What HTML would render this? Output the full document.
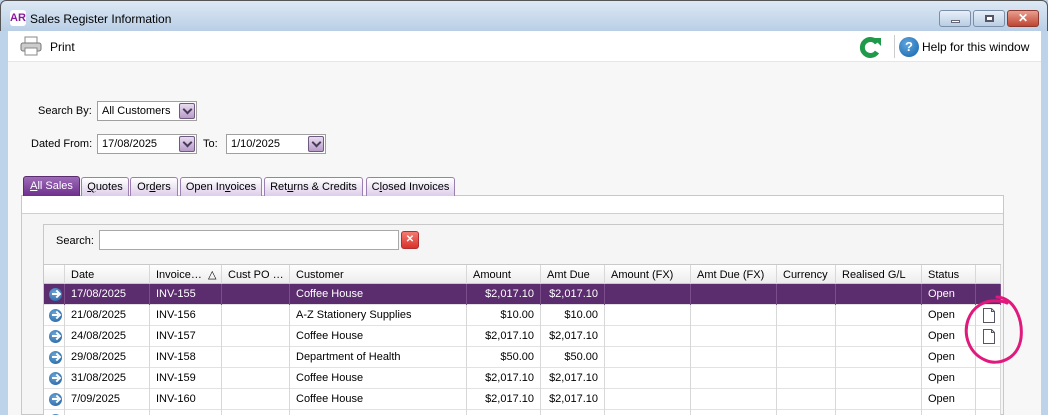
<!DOCTYPE html>
<html style="width:1048px;height:415px;overflow:hidden"><head><style>
*{margin:0;padding:0;box-sizing:border-box}
body{width:1048px;height:415px;overflow:hidden;font-family:"Liberation Sans",sans-serif;font-size:11px;color:#000;position:relative;background:#bcd3ea}
.a{position:absolute}
.title{left:0;top:0;width:1048px;height:31px;background:linear-gradient(#dde8f4,#b9cfe6);border:1px solid #555;border-bottom:none;border-radius:6px 6px 0 0}
.body{left:8px;top:31px;width:1033px;height:384px;background:#f7f7f7}
.tb{left:8px;top:31px;width:1033px;height:31px;background:#fff;border-bottom:1px solid #e6e6e6}
.combo{background:#fff;border:1px solid #a0a0a0;height:20px;padding:3px 4px;font-size:11px}
.dd{position:absolute;right:1px;top:1px;width:16px;height:16px;background:linear-gradient(#e8dcef,#b79cc8);border:1px solid #6e5a80;border-radius:2px}
.dd:after{content:"";position:absolute;left:4px;top:2px;width:5px;height:5px;border-right:2px solid #4a3a5a;border-bottom:2px solid #4a3a5a;transform:rotate(45deg)}
.tab{top:177px;height:19px;border:1px solid #9a7fb0;border-bottom:none;background:linear-gradient(#fff,#dccdea);border-radius:3px 3px 0 0;padding:3px 0;text-align:center;white-space:nowrap}
.grid{left:44px;top:264px;width:957px}
.row{position:absolute;left:0;width:957px;height:21px;border-bottom:1px solid #e2e2e2;background:#fff}
.c{position:absolute;top:0;height:21px;line-height:20px;padding:0 6px;border-right:1px solid #d8d8d8;white-space:nowrap;overflow:hidden}
.r{text-align:right}
.hdr{background:linear-gradient(#fff,#ececec);border-top:1px solid #c9c9c9;border-bottom:1px solid #c9c9c9;height:20px}
.sel{background:#5c2d6e;color:#fff}
.sel .c{border-right-color:#7a4e8a}
.arr{position:absolute;left:5px;top:4px;width:13px;height:13px;border-radius:50%;background:radial-gradient(circle at 40% 35%,#6aa3d6,#1d5f9c)}
.arr:after{content:"";position:absolute;left:3px;top:5px;width:6px;height:2px;background:#fff}
.arr:before{content:"";position:absolute;left:5px;top:3px;width:4px;height:4px;border-right:2px solid #fff;border-top:2px solid #fff;transform:rotate(45deg)}
</style></head><body>
<div class="a title"></div>
<div class="a" style="left:10px;top:10px;width:16px;height:16px;background:#fff;border-radius:3px;color:#8a1a9c;font-weight:bold;font-size:11px;line-height:16px;text-align:center">AR</div>
<div class="a" style="left:30px;top:12px;font-size:12px">Sales Register Information</div>
<div class="a" style="left:939px;top:10px;width:32px;height:17px;border:1px solid #7a8ea8;border-radius:3px;background:linear-gradient(#e7eff8,#b9cde3)"><div class="a" style="left:11px;top:9px;width:9px;height:3px;background:#fff;border:1px solid #667"></div></div>
<div class="a" style="left:973px;top:10px;width:32px;height:17px;border:1px solid #7a8ea8;border-radius:3px;background:linear-gradient(#e7eff8,#b9cde3)"><div class="a" style="left:11px;top:4px;width:9px;height:7px;border:2px solid #556;background:#fff"></div></div>
<div class="a" style="left:1007px;top:10px;width:32px;height:17px;border:1px solid #8a3a30;border-radius:3px;background:linear-gradient(#e8a090,#c04432);color:#fff;font-weight:bold;text-align:center;line-height:15px;font-size:12px">✕</div>
<div class="a body"></div>
<div class="a tb"></div>
<svg class="a" style="left:20px;top:36px" width="22" height="20"><rect x="5" y="1" width="12" height="7" fill="#fff" stroke="#888"/><rect x="1" y="7" width="20" height="8" rx="2" fill="#ccc" stroke="#777"/><rect x="5" y="12" width="12" height="7" fill="#fff" stroke="#888"/></svg>
<div class="a" style="left:50px;top:40px;font-size:12px">Print</div>
<svg class="a" style="left:858px;top:35px" width="26" height="24"><path d="M19 8 A8 8 0 1 0 19 17" fill="none" stroke="#1f9a4a" stroke-width="5"/><path d="M15 3 L23 3 L23 11 Z" fill="#1f9a4a"/></svg>
<div class="a" style="left:894px;top:35px;width:1px;height:23px;background:#ccc"></div>
<div class="a" style="left:899px;top:37px;width:20px;height:20px;border-radius:50%;background:radial-gradient(circle at 40% 35%,#5fa6e0,#1463a8);color:#fff;font-weight:bold;text-align:center;line-height:20px;font-size:13px">?</div>
<div class="a" style="left:922px;top:40px;font-size:12px">Help for this window</div>

<div class="a" style="left:38px;top:105px">Search By:</div>
<div class="a combo" style="left:97px;top:101px;width:100px">All Customers<div class="dd"></div></div>
<div class="a" style="left:31px;top:138px">Dated From:</div>
<div class="a combo" style="left:97px;top:134px;width:100px">17/08/2025<div class="dd"></div></div>
<div class="a" style="left:203px;top:138px">To:</div>
<div class="a combo" style="left:226px;top:134px;width:100px">1/10/2025<div class="dd"></div></div>

<div class="a" style="left:21px;top:195px;width:983px;height:220px;border:1px solid #c8c8c8;background:#f5f5f5"></div>
<div class="a" style="left:22px;top:196px;width:981px;height:18px;background:#fff;border-bottom:1px solid #d0d0d0"></div>
<div class="a tab" style="left:23px;width:57px;background:linear-gradient(#9c6bb8,#6e2f8c);color:#fff;border-color:#5c2d6e;top:176px;height:20px"><u>A</u>ll Sales</div>
<div class="a tab" style="left:81px;width:48px"><u>Q</u>uotes</div>
<div class="a tab" style="left:130px;width:48px">Or<u>d</u>ers</div>
<div class="a tab" style="left:180px;width:82px">Open In<u>v</u>oices</div>
<div class="a tab" style="left:264px;width:99px">Ret<u>u</u>rns &amp; Credits</div>
<div class="a tab" style="left:366px;width:89px">C<u>l</u>osed Invoices</div>

<div class="a" style="left:43px;top:224px;width:960px;height:191px;border-left:1px solid #c8c8c8;border-top:1px solid #c8c8c8"></div>
<div class="a" style="left:56px;top:235px">Search:</div>
<div class="a" style="left:99px;top:230px;width:300px;height:20px;background:#fff;border:1px solid #a8a8a8"></div>
<div class="a" style="left:401px;top:231px;width:18px;height:18px;border-radius:3px;background:linear-gradient(#f47a72,#d8332a);border:1px solid #b03030;color:#fff;font-size:10px;text-align:center;line-height:16px;font-weight:bold">✕</div>

<div class="a" style="left:44px;top:264px;width:957px;height:151px;overflow:hidden">
<div class="a grid" style="left:0;top:0">
<div class="row hdr" style="top:0">
<div class="c" style="left:0;width:21px"></div><div class="c" style="left:21px;width:85px">Date</div><div class="c" style="left:106px;width:72px">Invoice… &nbsp;△</div><div class="c" style="left:178px;width:68px">Cust PO …</div><div class="c" style="left:246px;width:177px">Customer</div><div class="c" style="left:423px;width:74px">Amount</div><div class="c" style="left:497px;width:64px">Amt Due</div><div class="c" style="left:561px;width:86px">Amount (FX)</div><div class="c" style="left:647px;width:86px">Amt Due (FX)</div><div class="c" style="left:733px;width:59px">Currency</div><div class="c" style="left:792px;width:86px">Realised G/L</div><div class="c" style="left:878px;width:54px">Status</div><div class="c" style="left:932px;width:25px"></div>
</div>
</div>
<div class="a grid" id="g" style="left:0;top:20px"></div>
</div>
<script>
var d=[["17/08/2025","INV-155","Coffee House","$2,017.10","$2,017.10"],["21/08/2025","INV-156","A-Z Stationery Supplies","$10.00","$10.00"],["24/08/2025","INV-157","Coffee House","$2,017.10","$2,017.10"],["29/08/2025","INV-158","Department of Health","$50.00","$50.00"],["31/08/2025","INV-159","Coffee House","$2,017.10","$2,017.10"],["7/09/2025","INV-160","Coffee House","$2,017.10","$2,017.10"],["","","","",""]];
var h="";d.forEach(function(r,i){var doc=(i==1||i==2)?'<svg style="position:absolute;left:6px;top:3px" width="14" height="15"><path d="M1.5 .5H9.5L12.5 3.5V14.5H1.5Z" fill="#fff" stroke="#556"/><path d="M9.5 .5V3.5H12.5" fill="none" stroke="#556"/></svg>':'';
h+='<div class="row'+(i==0?' sel':'')+'" style="top:'+(i*21)+'px"><div class="c" style="left:0;width:21px"><span class="arr"></span></div><div class="c" style="left:21px;width:85px">'+r[0]+'</div><div class="c" style="left:106px;width:72px">'+r[1]+'</div><div class="c" style="left:178px;width:68px"></div><div class="c" style="left:246px;width:177px">'+r[2]+'</div><div class="c r" style="left:423px;width:74px">'+r[3]+'</div><div class="c r" style="left:497px;width:64px">'+r[4]+'</div><div class="c" style="left:561px;width:86px"></div><div class="c" style="left:647px;width:86px"></div><div class="c" style="left:733px;width:59px"></div><div class="c" style="left:792px;width:86px"></div><div class="c" style="left:878px;width:54px">'+(r[0]?'Open':'')+'</div><div class="c" style="left:932px;width:25px">'+doc+'</div></div>';});
document.getElementById("g").innerHTML=h;
</script>
<svg class="a" style="left:955px;top:290px" width="75" height="90"><path d="M42 7 C60 8 68 30 66 48 C63 70 42 76 30 70 C14 63 8 45 13 30 C18 16 30 10 42 11 C46 11 50 12 52 13" fill="none" stroke="#e0197c" stroke-width="3" stroke-linecap="round"/></svg>
<div class="a" style="left:1041px;top:31px;width:7px;height:384px;background:#bcd3ea"></div>
</body></html>
